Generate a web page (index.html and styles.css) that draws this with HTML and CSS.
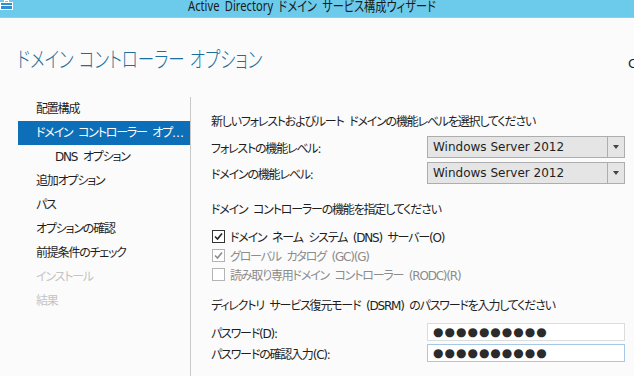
FILE: index.html
```html
<!DOCTYPE html>
<html lang="ja">
<head>
  <meta charset="UTF-8" />
  <title>Active Directory ドメイン サービス構成ウィザード</title>
  <link rel="stylesheet" href="styles.css">
</head>
<body>
  <div class="titlebar">
    <svg class="app-icon" width="14" height="10" viewBox="0 0 14 10">
      <rect x="0.5" y="2.5" width="12" height="7" fill="#2f8fd0" stroke="#ffffff" />
      <rect x="4.5" y="0.5" width="4" height="2" fill="none" stroke="#ffffff" />
      <line x1="1" y1="5.5" x2="12" y2="5.5" stroke="#ffffff" />
    </svg>
    <span class="window-title">Active Directory ドメイン サービス構成ウィザード</span>
  </div>

  <header class="page-head">
    <h1>ドメイン コントローラー オプション</h1>
    <span class="target">C</span>
  </header>

  <main class="wizard">
    <nav class="steps">
      <div class="step">配置構成</div>
      <div class="step active">ドメイン コントローラー オプ…</div>
      <div class="step sub">DNS オプション</div>
      <div class="step">追加オプション</div>
      <div class="step">パス</div>
      <div class="step">オプションの確認</div>
      <div class="step">前提条件のチェック</div>
      <div class="step disabled">インストール</div>
      <div class="step disabled">結果</div>
    </nav>

    <section class="options">
      <p class="section-title">新しいフォレストおよびルート ドメインの機能レベルを選択してください</p>
      <div class="field-grid selects">
        <label>フォレストの機能レベル:</label>
        <div class="select"><span>Windows Server 2012</span><i class="arrow"></i></div>
        <label>ドメインの機能レベル:</label>
        <div class="select"><span>Windows Server 2012</span><i class="arrow"></i></div>
      </div>

      <p class="section-title second">ドメイン コントローラーの機能を指定してください</p>
      <div class="checks">
        <div class="check">
          <span class="box"><svg width="11" height="11" viewBox="0 0 11 11"><path d="M2 5.5 L4.5 8 L9 2.5" fill="none" stroke="#222" stroke-width="1.6" /></svg></span>
          ドメイン ネーム システム (DNS) サーバー(O)
        </div>
        <div class="check off">
          <span class="box"><svg width="11" height="11" viewBox="0 0 11 11"><path d="M2 5.5 L4.5 8 L9 2.5" fill="none" stroke="#8c8c8c" stroke-width="1.6" /></svg></span>
          グローバル カタログ (GC)(G)
        </div>
        <div class="check off">
          <span class="box"></span>
          読み取り専用ドメイン コントローラー (RODC)(R)
        </div>
      </div>

      <p class="section-title third">ディレクトリ サービス復元モード (DSRM) のパスワードを入力してください</p>
      <div class="field-grid passwords">
        <label>パスワード(D):</label>
        <div class="password">●●●●●●●●●●</div>
        <label>パスワードの確認入力(C):</label>
        <div class="password focused">●●●●●●●●●●</div>
      </div>
    </section>
  </main>
</body>
</html>
```

FILE: styles.css
```css
body {
  margin: 0;
  height: 376px;
  overflow: hidden;
  background-color: #fbfbfb;
  color: #1e1e1e;
  font-family: "DejaVu Sans", "Noto Sans CJK JP", sans-serif;
  font-size: 12px;
  letter-spacing: -1.2px;
  word-spacing: 3px;
  font-feature-settings: "palt";
}

.titlebar {
  position: relative;
  height: 17px;
  background-color: #6ccbea;
  border-bottom: 1px solid #a9c6d2;
  overflow: hidden;
  text-align: center;
}

.app-icon {
  position: absolute;
  left: 0;
  top: 0;
}

/* condensed like the system font */
.window-title {
  display: inline-block;
  margin-top: -3px;
  margin-right: 11px;
  font-family: "Noto Sans", "Noto Sans CJK JP", sans-serif;
  font-size: 14px;
  line-height: 15px;
  letter-spacing: 0;
  word-spacing: 3px;
  white-space: nowrap;
  color: #1a1a1a;
  transform: scaleX(0.8);
}

.page-head {
  display: flex;
  justify-content: space-between;
  height: 79px;
}

.page-head h1 {
  margin: 27px 0 0 17px;
  font-family: "Noto Sans CJK JP", sans-serif;
  font-weight: 300;
  font-size: 22px;
  line-height: 24px;
  letter-spacing: 0;
  word-spacing: 2px;
  color: #1b6f9d;
  white-space: nowrap;
  transform: scaleX(0.75);
  transform-origin: left center;
}

.target {
  margin-top: 38px;
  margin-right: -2px;
  font-size: 13px;
  color: #222;
}

.wizard {
  display: flex;
}

.steps {
  width: 172px;
  padding-left: 18px;
  border-right: 1px solid #c8c8c8;
  height: 280px;
}

.step {
  height: 24px;
  line-height: 24px;
  padding-left: 18px;
  white-space: nowrap;
  overflow: hidden;
}

.step.sub {
  padding-left: 37px;
}

.step.active {
  background-color: #0d6fb8;
  color: #ffffff;
}

.step.disabled {
  color: #c4c4c4;
}

.options {
  padding: 16px 0 0 20px;
}

.section-title {
  margin: 0;
  height: 18px;
  line-height: 18px;
  white-space: nowrap;
}

.section-title.second {
  margin-top: 17px;
}

.section-title.third {
  margin-top: 14px;
}

.field-grid {
  display: grid;
  grid-template-columns: 216px 198px;
  align-items: center;
}

.selects {
  margin-top: 5px;
  row-gap: 4px;
}

.passwords {
  margin-top: 8px;
  row-gap: 3px;
}

.select {
  display: flex;
  height: 20px;
  border: 1px solid #adadad;
  background-color: #e5e5e5;
}

.select span {
  flex: 1;
  padding-left: 5px;
  line-height: 20px;
  letter-spacing: 0;
  word-spacing: 0;
}

.arrow {
  width: 16px;
  border-left: 1px solid #adadad;
  position: relative;
}

.arrow::after {
  content: "";
  position: absolute;
  left: 5px;
  top: 8px;
  border-left: 3.5px solid transparent;
  border-right: 3.5px solid transparent;
  border-top: 4px solid #444;
}

.checks {
  margin-top: 8px;
  display: flex;
  flex-direction: column;
  gap: 1px;
}

.check {
  display: flex;
  align-items: center;
  height: 18px;
  gap: 5px;
  padding-left: 1px;
  white-space: nowrap;
}

.check .box {
  width: 11px;
  height: 11px;
  border: 1px solid #333;
  background-color: #fff;
  display: flex;
}

.check.off {
  color: #8c8c8c;
}

.check.off .box {
  border-color: #b4b4b4;
}

.password {
  height: 16px;
  border: 1px solid #dcdcdc;
  background-color: #fff;
  padding-left: 5px;
  font-family: "DejaVu Sans", sans-serif;
  font-size: 12px;
  line-height: 16px;
  letter-spacing: 1px;
  word-spacing: 0;
  color: #2b2b2b;
}

.password.focused {
  border-color: #a6c8e6;
}
```
